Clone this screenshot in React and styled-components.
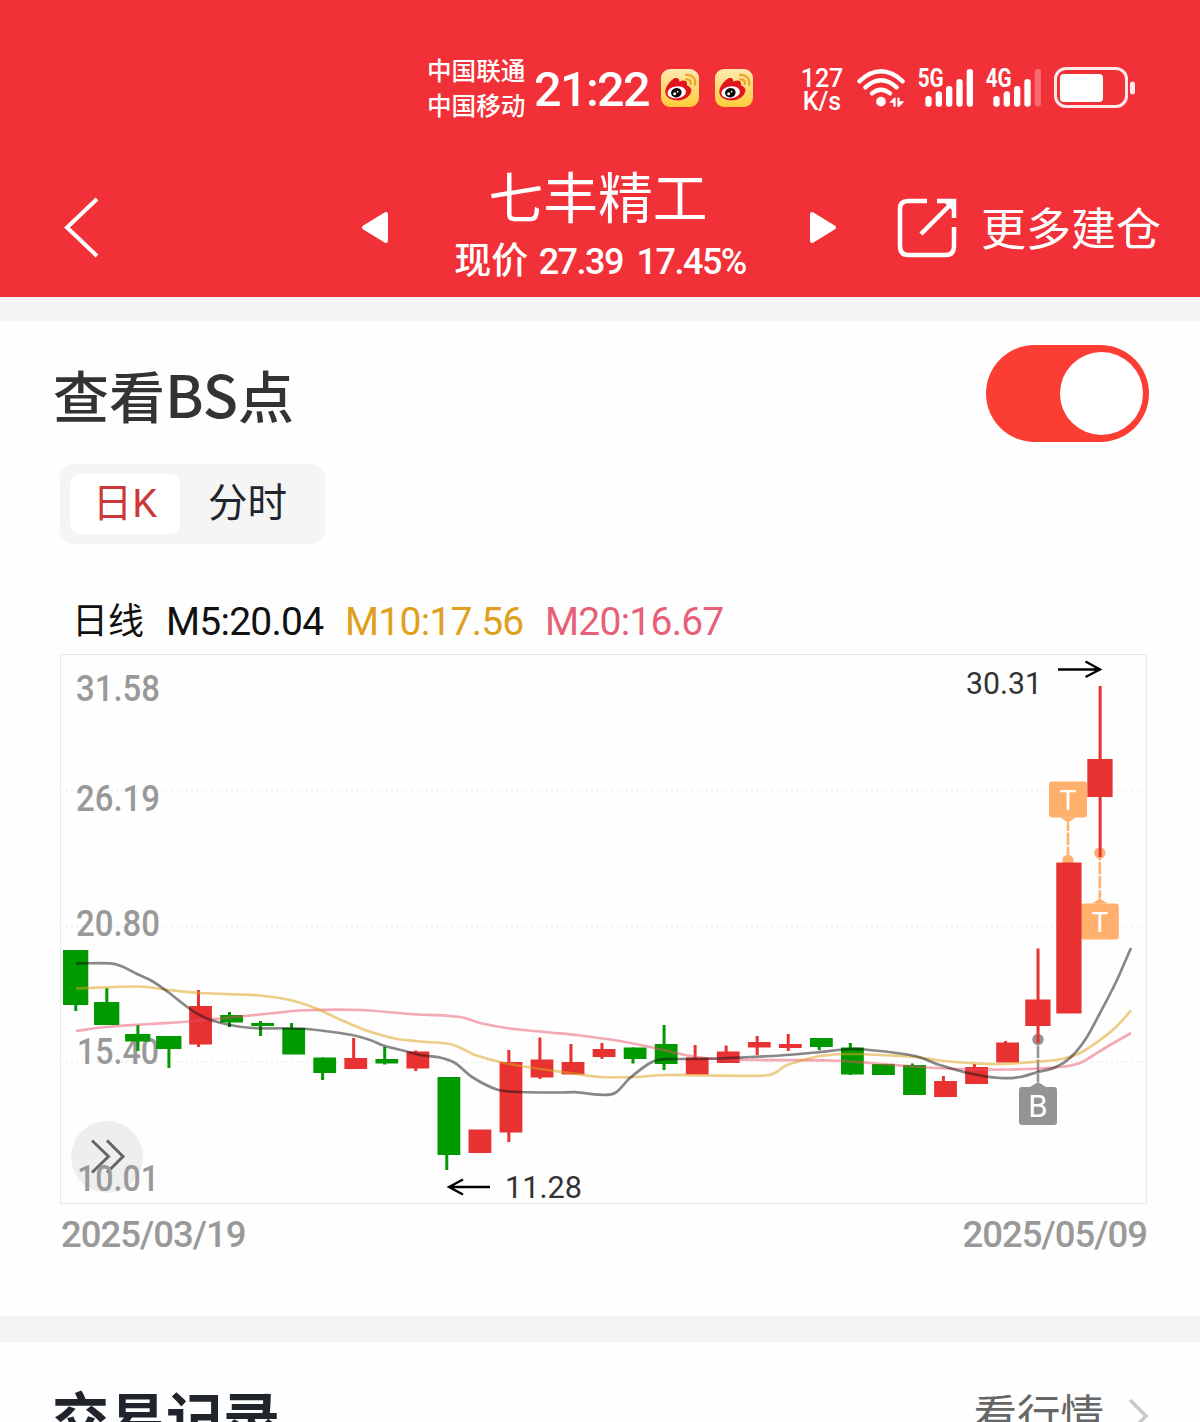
import React from 'react';
import styled, { createGlobalStyle } from 'styled-components';

const UP = '#e83131';
const DOWN = '#009900';
const STEP = 31.04;

// [color, body top, body bottom, wick top, wick bottom]
const candles = [
  [DOWN, 950, 1005, 950, 1011],
  [DOWN, 1002, 1025, 988, 1025],
  [DOWN, 1034, 1041.5, 1025, 1051],
  [DOWN, 1036, 1049, 1036, 1068],
  [UP, 1006, 1044.5, 990, 1047],
  [DOWN, 1015, 1022.5, 1012, 1027],
  [DOWN, 1023, 1026, 1021, 1036],
  [DOWN, 1028, 1054.5, 1023, 1054],
  [DOWN, 1057.5, 1073, 1057.5, 1080],
  [UP, 1058, 1069, 1038, 1069],
  [DOWN, 1059, 1063.5, 1047, 1064.5],
  [UP, 1051.5, 1068.5, 1050.5, 1071],
  [DOWN, 1077, 1155, 1077, 1170],
  [UP, 1129.5, 1153, 1130, 1153],
  [UP, 1062, 1132.5, 1050, 1142],
  [UP, 1059.5, 1077.5, 1037.5, 1079],
  [UP, 1062, 1074.5, 1044, 1074],
  [UP, 1049, 1057, 1043, 1059],
  [DOWN, 1047.5, 1059, 1047.5, 1063.5],
  [DOWN, 1044, 1064, 1025, 1070],
  [UP, 1057.5, 1074.5, 1045, 1074],
  [UP, 1051.5, 1063, 1045.5, 1063],
  [UP, 1042, 1047.5, 1036, 1055],
  [UP, 1044, 1048, 1034, 1051],
  [DOWN, 1038, 1047, 1038, 1050],
  [DOWN, 1047.5, 1074.5, 1043, 1075],
  [DOWN, 1064, 1075, 1064, 1075],
  [DOWN, 1065, 1095, 1063.5, 1095],
  [UP, 1081, 1097, 1076, 1097],
  [UP, 1067, 1084, 1064, 1084],
  [UP, 1042.5, 1062.5, 1041, 1062],
  [UP, 999.5, 1026, 948.5, 1043],
  [UP, 862.5, 1013.5, 863, 1013],
  [UP, 759, 797, 686, 857],
];

const ma5 = [
  [76, 963.4], [110, 963.4], [121, 966], [137, 974], [152, 981], [168, 992],
  [190, 1009], [208, 1019], [230, 1025], [252, 1028], [300, 1028.5], [325, 1031],
  [352, 1035], [370, 1040], [385, 1046], [405, 1051], [420, 1055], [440, 1057.5],
  [455, 1063], [472, 1077], [497, 1089.5], [520, 1092], [560, 1092.5],
  [575, 1092.2], [600, 1094.7], [615, 1093], [630, 1078], [650, 1063],
  [660, 1059.5], [680, 1059], [720, 1058.5], [750, 1057], [780, 1055.5],
  [815, 1052.5], [850, 1049], [865, 1049.5], [915, 1056], [940, 1065],
  [970, 1073.5], [1000, 1078], [1020, 1077], [1038, 1072], [1055, 1067.5],
  [1070, 1058], [1085, 1040], [1100, 1013], [1116, 982], [1131, 948],
];

const ma10 = [
  [76, 988.5], [140, 986.5], [165, 989.5], [200, 993], [260, 995.5], [290, 1000],
  [315, 1008], [340, 1019.5], [365, 1030], [395, 1038.5], [420, 1041.5],
  [450, 1044], [465, 1050], [475, 1055], [500, 1062], [530, 1067.5], [570, 1073],
  [600, 1077], [635, 1077], [665, 1075], [700, 1075.5], [765, 1075.5],
  [775, 1073], [785, 1066], [800, 1061], [820, 1056], [850, 1054], [915, 1057],
  [940, 1060.5], [970, 1063], [1000, 1064], [1040, 1061.5], [1062, 1059],
  [1080, 1053], [1100, 1040], [1116, 1027], [1131, 1010.5],
];

const ma20 = [
  [76, 1031], [105, 1027], [150, 1024], [190, 1021.5], [230, 1017.5],
  [270, 1013.5], [300, 1010.5], [360, 1010], [410, 1014], [450, 1016],
  [465, 1018], [480, 1023], [510, 1028.5], [550, 1032.5], [580, 1035.5],
  [620, 1041], [650, 1047], [685, 1055], [710, 1058.5], [760, 1060],
  [830, 1060.5], [870, 1063], [920, 1067], [960, 1069], [1010, 1069.5],
  [1060, 1067], [1080, 1063], [1092, 1056], [1110, 1045], [1131, 1033],
];

// label, x, baseline, width
const prices = [
  ['31.58', 76, 701, 84],
  ['26.19', 76, 811, 84],
  ['20.80', 76, 936, 84],
  ['15.40', 77, 1064, 82],
  ['10.01', 77, 1191, 82],
];

const smooth = (pts) =>
  pts.reduce((d, p, i) => {
    if (i === 0) return `M${p[0]} ${p[1]}`;
    const a = pts[i - 2] || pts[i - 1];
    const b = pts[i - 1];
    const c = pts[i + 1] || p;
    const third = (p[0] - b[0]) / 3;
    const m1 = (p[1] - a[1]) / (p[0] - a[0]);
    const m2 = (c[1] - b[1]) / (c[0] - b[0]);
    return `${d}C${b[0] + third} ${b[1] + m1 * third} ${p[0] - third} ${p[1] - m2 * third} ${p[0]} ${p[1]}`;
  }, '');

function Weibo() {
  return (
    <svg width="38" height="38" viewBox="0 0 114 114">
      <defs>
        <linearGradient id="weibo" x1="0" y1="0" x2="0" y2="1">
          <stop offset="0" stopColor="#ffe9ae" />
          <stop offset="1" stopColor="#ffcc39" />
        </linearGradient>
      </defs>
      <rect width="114" height="114" rx="27" fill="url(#weibo)" />
      <path
        d="M13 70C12 55 27 36 40 28C50 24 56 30 55 38C66 32 79 33 78 45C77 49 79 50 83 52C93 57 93 67 87 76C78 90 61 96 43 94C27 92 14 84 13 70Z"
        fill="#e0151f"
      />
      <ellipse cx="47" cy="70" rx="28" ry="18" fill="#fff" transform="rotate(-7 47 70)" />
      <ellipse cx="46" cy="71" rx="16" ry="14" fill="#080808" transform="rotate(-15 46 71)" />
      <circle cx="41" cy="74" r="4.5" fill="#fff" />
      <circle cx="50" cy="68" r="2.5" fill="#fff" />
      <g fill="none" stroke="#eda126" strokeWidth="6.5" strokeLinecap="round">
        <path d="M75 18C94 16 106 30 102 47" />
        <path d="M76 31C86 30 91 37 89 45" />
      </g>
    </svg>
  );
}

function Wifi() {
  return (
    <svg width="50" height="42" viewBox="0 0 150 126">
      <g fill="none" stroke="#fff" strokeWidth="13" strokeLinecap="round">
        <path d="M10 43Q75 -17 140 43" />
        <path d="M28 61Q75 18 122 61" />
        <path d="M48 79Q75 57 102 79" />
      </g>
      <circle cx="75" cy="104" r="14.5" fill="#fff" />
      <path d="M100 107L114 92H119V119H112V107Z M124 92H131V103H145L130 119H124Z" fill="#fff" />
    </svg>
  );
}

function Signal({ label, weak }) {
  const bars = [81, 67, 51, 30, 0];
  return (
    <SignalSvg viewBox="0 0 168 120">
      {bars.map((y, i) => (
        <rect
          key={y}
          x={22 + i * 31}
          y={y + 3}
          width="19"
          height={113 - y}
          rx="9"
          fill="#fff"
          opacity={weak && i === 4 ? 0.28 : 1}
        />
      ))}
      <SignalText x="-1" y="57" textLength="78" lengthAdjust="spacingAndGlyphs">
        {label}
      </SignalText>
    </SignalSvg>
  );
}

function Battery() {
  return (
    <svg width="82" height="42" viewBox="0 0 82 42">
      <rect x="1.5" y="1.5" width="71" height="38" rx="10.5" fill="none" stroke="#fff" strokeWidth="3" opacity="0.9" />
      <rect x="6" y="7" width="43" height="28" rx="4" fill="#fff" />
      <rect x="76" y="14.5" width="5" height="13" rx="2.5" fill="#fff" opacity="0.9" />
    </svg>
  );
}

function Marker({ label, x, top, point, color, below }) {
  const buy = label === 'B';
  const height = buy ? 38 : 36;
  const edge = below ? top : top + height;
  const tip = below ? top - 5 : top + height + 5;
  return (
    <g>
      <circle cx={x} cy={point} r="5.7" fill={color} />
      <path
        d={`M${x} ${tip}V${point}`}
        stroke={color}
        strokeWidth="2.6"
        strokeDasharray="12.5 1.5"
        strokeDashoffset="4"
      />
      <path d={`M${x - 8} ${edge}L${x} ${tip}L${x + 8} ${edge}Z`} fill={color} />
      <rect x={x - 19} y={top} width="38" height={height} rx="3" fill={color} />
      <MarkerText x={x} y={top + height / 2 + (buy ? 11 : 10)} $size={buy ? 31 : 28}>
        {label}
      </MarkerText>
    </g>
  );
}

function Chart() {
  return (
    <ChartFrame>
      <ChartSvg viewBox="61 655 1085 548">
        <g stroke="#eeeeee" strokeWidth="1.5" strokeDasharray="2 3">
          <path d="M61 790.5H1146M61 926.5H1146M61 1062H1146" />
        </g>
        <circle cx="107" cy="1157" r="36" fill="#eeeeee" />
        <path
          d="M92 1140.5L108.5 1156.5L92 1172.5M107 1140.5L123 1156.5L107 1172.5"
          fill="none"
          stroke="#666"
          strokeWidth="3"
        />
        {prices.map(([label, x, y, width]) => (
          <PriceText key={label} x={x} y={y} textLength={width} lengthAdjust="spacingAndGlyphs">
            {label}
          </PriceText>
        ))}
        <Marker label="T" x={1068} top={781.5} point={860.5} color="#ffb06c" />
        <Marker label="T" x={1099.8} top={903.5} point={853} color="#ffb06c" below />
        <Marker label="B" x={1038} top={1087} point={1039.5} color="#949494" below />
        {candles.map(([color, top, bottom, high, low], i) => {
          const wide = i < 4 || i > 30;
          const left = 63 + i * STEP;
          return (
            <g key={i} fill={color}>
              <rect x={left + (wide ? 0 : 2)} y={top} width={wide ? 25.3 : 22.8} height={bottom - top} />
              <rect x={left + (wide ? 11.3 : 9.8)} y={high} width="3" height={low - high} />
            </g>
          );
        })}
        <g fill="none" strokeWidth="2.7">
          <path d={smooth(ma20)} stroke="#e85068" opacity="0.48" />
          <path d={smooth(ma10)} stroke="#dda21e" opacity="0.53" />
          <path d={smooth(ma5)} stroke="#111" opacity="0.5" />
        </g>
        <g fill="none" stroke="#000" strokeWidth="2.3">
          <path d="M1058 669.5H1100M1085.5 661.5L1100 669.5L1085.5 677" />
          <path d="M490 1187H449M463 1179.5L449 1187L463 1194.5" />
        </g>
        <LimitText x="966" y="693.5" textLength="76" lengthAdjust="spacingAndGlyphs">30.31</LimitText>
        <LimitText x="505" y="1197.5" textLength="77" lengthAdjust="spacingAndGlyphs">11.28</LimitText>
      </ChartSvg>
    </ChartFrame>
  );
}

export default function App() {
  return (
    <>
      <GlobalStyle />
      <Page>
        <Header>
          <StatusBar>
            <Carriers>
              <span>中国联通</span>
              <span>中国移动</span>
            </Carriers>
            <Clock>21:22</Clock>
            <Apps>
              <Weibo />
              <Weibo />
            </Apps>
            <Speed>
              <span>127</span>
              <span>K/s</span>
            </Speed>
            <Indicators>
              <Wifi />
              <Signal label="5G" />
              <Signal label="4G" weak />
              <Battery />
            </Indicators>
          </StatusBar>
          <Nav>
            <BackButton>
              <svg width="36" height="62" viewBox="0 0 36 62">
                <path d="M34 2L4 30.5L34 59" fill="none" stroke="#fff" strokeWidth="4" />
              </svg>
            </BackButton>
            <Arrow>
              <svg width="28" height="34" viewBox="0 0 28 34">
                <path d="M3 16.5L25 3V30Z" fill="#fff" stroke="#fff" strokeWidth="4" strokeLinejoin="round" />
              </svg>
            </Arrow>
            <Stock>
              <StockName>七丰精工</StockName>
              <Quote>
                <QuoteLabel>现价</QuoteLabel>
                <span>27.39</span>
                <span>17.45%</span>
              </Quote>
            </Stock>
            <Arrow>
              <svg width="28" height="34" viewBox="0 0 28 34">
                <path d="M25 16.5L3 3V30Z" fill="#fff" stroke="#fff" strokeWidth="4" strokeLinejoin="round" />
              </svg>
            </Arrow>
            <More>
              <svg width="60" height="60" viewBox="0 0 60 60">
                <g fill="none" stroke="#fff" strokeWidth="4.5">
                  <path d="M30 3H11Q3 3 3 11V48Q3 57 11 57H49Q57 57 57 48V29" />
                  <path d="M40 3H57V20M56 4L24 36" />
                </g>
                <path d="M46 3H57V14Z" fill="#fff" />
              </svg>
              <MoreLabel>更多建仓</MoreLabel>
            </More>
          </Nav>
        </Header>
        <Divider $height={24} />
        <Panel>
          <PanelHead>
            <PanelTitle>
              查看<Latin>BS</Latin>点
            </PanelTitle>
            <Toggle>
              <Knob />
            </Toggle>
          </PanelHead>
          <Tabs>
            <Tab $active>日K</Tab>
            <Tab>分时</Tab>
          </Tabs>
          <Legend>
            <LegendTitle>日线</LegendTitle>
            <LegendItem $color="#111" $width={179}>M5:20.04</LegendItem>
            <LegendItem $color="#dfa01d" $width={200}>M10:17.56</LegendItem>
            <LegendItem $color="#e66178" $width={180}>M20:16.67</LegendItem>
          </Legend>
          <Chart />
          <Dates>
            <span>2025/03/19</span>
            <span>2025/05/09</span>
          </Dates>
        </Panel>
        <Divider $height={25.5} />
        <Records>
          <RecordsTitle>交易记录</RecordsTitle>
          <RecordsLink>
            看行情
            <svg width="22" height="40" viewBox="0 0 22 40">
              <path d="M2 3L18 19L2 35" fill="none" stroke="#c8c8c8" strokeWidth="3.5" />
            </svg>
          </RecordsLink>
        </Records>
      </Page>
    </>
  );
}

const GlobalStyle = createGlobalStyle`
  body {
    margin: 0;
    background: #fff;
    font-family: Roboto, "Noto Sans CJK SC", sans-serif;
  }

  * {
    box-sizing: border-box;
  }

  svg {
    display: block;
    flex: none;
    overflow: visible;
  }
`;

const Page = styled.div`
  width: 1200px;
  height: 1422px;
  overflow: hidden;
  background: #fefefe;
`;

const Header = styled.header`
  height: 297px;
  color: #fff;
  background: #f13038;
`;

const StatusBar = styled.div`
  display: flex;
  align-items: center;
  height: 158px;
  padding: 18px 0 0 427px;
`;

const Carriers = styled.div`
  display: flex;
  flex-direction: column;
  width: 107px;
  padding-top: 3px;
  font-size: 24.6px;
  font-weight: 500;
  line-height: 34.5px;
`;

const Clock = styled.div`
  width: 127px;
  padding-top: 4px;
  font-size: 48.5px;
  font-weight: 500;
  line-height: 56px;
  letter-spacing: -1.6px;
  white-space: nowrap;
`;

const Apps = styled.div`
  display: flex;
  gap: 16px;
  width: 140px;
`;

const Speed = styled.div`
  display: flex;
  flex-direction: column;
  align-items: center;
  width: 42px;
  padding-top: 4px;
  font-size: 25px;
  font-weight: 500;
  line-height: 23.5px;
`;

const Indicators = styled.div`
  display: flex;
  align-items: center;
  gap: 12px;
  margin-left: 13px;
`;

const SignalSvg = styled.svg`
  width: 56px;
  height: 40px;
`;

const SignalText = styled.text`
  fill: #fff;
  font: 700 75px Roboto, sans-serif;
`;

const Nav = styled.nav`
  display: flex;
  align-items: center;
  height: 139px;
  padding-left: 63px;
`;

const BackButton = styled.div`
  width: 298px;
`;

const Arrow = styled.div`
  width: 28px;
`;

const Stock = styled.div`
  display: flex;
  flex-direction: column;
  align-items: center;
  width: 420px;
`;

const StockName = styled.h1`
  margin: 0;
  padding-right: 2px;
  font-size: 54.8px;
  font-weight: 400;
  line-height: 68px;
`;

const Quote = styled.div`
  display: flex;
  align-items: center;
  gap: 13.5px;
  padding-left: 2px;
  font-size: 36px;
  font-weight: 500;
  line-height: 58px;
  letter-spacing: -1.5px;
`;

const QuoteLabel = styled.span`
  margin-right: -3px;
  font-size: 37px;
  letter-spacing: 0;
`;

const More = styled.div`
  display: flex;
  align-items: center;
  gap: 24px;
  margin-left: 60px;
  font-size: 45px;
  line-height: 60px;
  white-space: nowrap;
`;

const MoreLabel = styled.span`
  padding-top: 6px;
`;

const Divider = styled.div`
  height: ${({ $height }) => $height}px;
  background: #f4f4f4;
`;

const Panel = styled.section`
  height: 995px;
  padding: 24px 51px 0 54px;
`;

const PanelHead = styled.div`
  display: flex;
  align-items: center;
  justify-content: space-between;
  height: 96px;
`;

const PanelTitle = styled.h2`
  margin: 0 0 0 -1px;
  padding-top: 6px;
  color: #333;
  font-size: 56px;
  font-weight: 500;
  line-height: 80px;
`;

const Latin = styled.span`
  font-family: "Noto Sans CJK SC", sans-serif;
  font-size: 58px;
`;

const Toggle = styled.div`
  display: flex;
  align-items: center;
  justify-content: flex-end;
  width: 163px;
  height: 97px;
  padding-right: 6px;
  border-radius: 49px;
  background: #fc3d33;
`;

const Knob = styled.div`
  width: 83px;
  height: 83px;
  border-radius: 50%;
  background: #fff;
`;

const Tabs = styled.div`
  display: flex;
  align-items: center;
  width: 265px;
  height: 80px;
  margin: 23px 0 0 6px;
  padding: 0 10px;
  border-radius: 14px;
  background: #f5f5f5;
`;

const Tab = styled.div`
  width: ${({ $active }) => ($active ? 110 : 135)}px;
  height: 60px;
  border-radius: 10px;
  background: ${({ $active }) => ($active ? '#fff' : 'transparent')};
  color: ${({ $active }) => ($active ? '#cc3838' : '#20252b')};
  font-size: 39.5px;
  line-height: 60px;
  text-align: center;
`;

const Legend = styled.div`
  display: flex;
  align-items: center;
  height: 60px;
  margin: 46px 0 4px;
  padding: 3px 0 0 18px;
  line-height: 60px;
`;

const LegendTitle = styled.span`
  width: 94px;
  padding-top: 1px;
  color: #111;
  font-size: 36px;
`;

const LegendItem = styled.span`
  width: ${({ $width }) => $width}px;
  color: ${({ $color }) => $color};
  font-size: 39px;
  letter-spacing: -0.75px;
`;

const ChartFrame = styled.div`
  width: 1087px;
  height: 550px;
  margin-left: 6px;
  border: 1px solid #e8e8e8;
`;

const ChartSvg = styled.svg`
  width: 1085px;
  height: 548px;
`;

const PriceText = styled.text`
  fill: #999;
  font: 500 36.5px Roboto, sans-serif;
`;

const LimitText = styled.text`
  fill: #333;
  font: 400 32px Roboto, sans-serif;
`;

const MarkerText = styled.text`
  fill: #fff;
  font-family: Roboto, sans-serif;
  font-size: ${({ $size }) => $size}px;
  text-anchor: middle;
`;

const Dates = styled.div`
  display: flex;
  justify-content: space-between;
  margin: 9px 2px 0 7px;
  color: #999;
  font-size: 36.5px;
  font-weight: 500;
  line-height: 44px;
  letter-spacing: -1px;
`;

const Records = styled.section`
  display: flex;
  align-items: center;
  justify-content: space-between;
  height: 154px;
  padding: 0 50px 0 52px;
`;

const RecordsTitle = styled.h2`
  margin: 0;
  padding-top: 4px;
  color: #20252b;
  font-size: 57px;
  font-weight: 700;
  line-height: 80px;
`;

const RecordsLink = styled.div`
  display: flex;
  align-items: center;
  gap: 24px;
  padding-bottom: 4px;
  color: #666;
  font-size: 43.5px;
  line-height: 60px;
`;
